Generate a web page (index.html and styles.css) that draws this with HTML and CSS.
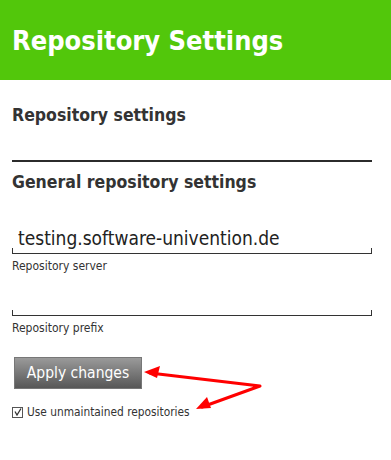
FILE: index.html
```html
<!DOCTYPE html>
<html lang="en">
<head>
    <meta charset="UTF-8">
    <meta name="viewport" content="width=device-width, initial-scale=1.0">
    <title>Repository Settings</title>
    <link rel="stylesheet" href="styles.css">
</head>
<body>
    <div class="header">
        <h1>Repository Settings</h1>
    </div>
    <div class="content">
        <h2 class="section-title">Repository settings</h2>
        <h2 class="group-title">General repository settings</h2>

        <div class="field">
            <input type="text" class="text-input" id="server" value="testing.software-univention.de">
            <label for="server">Repository server</label>
        </div>

        <div class="field">
            <input type="text" class="text-input" id="prefix" value="">
            <label for="prefix">Repository prefix</label>
        </div>

        <button type="button" class="apply">Apply changes</button>

        <label class="check">
            <span class="box">
                <svg width="8" height="8" viewBox="0 0 8 8"><path d="M1 3.5 L3 7 L7 0.5" fill="none" stroke="#333" stroke-width="1.3"/></svg>
            </span>
            Use unmaintained repositories
        </label>

        <!-- annotation arrows -->
        <svg class="arrows" width="391" height="460" viewBox="0 0 391 460">
            <path d="M260 386 L150 373 M260 386 L202 407" fill="none" stroke="#f00" stroke-width="3" stroke-linecap="round"/>
            <path d="M144 372 L160 366 L157 378 Z" fill="#f00"/>
            <path d="M196 409 L207 397 L211 408 Z" fill="#f00"/>
        </svg>
    </div>
</body>
</html>
```

FILE: styles.css
```css
body {
    margin: 0;
    font-family: "DejaVu Sans Condensed", "DejaVu Sans", sans-serif;
    font-stretch: condensed;
    color: #333;
    background-color: #fff;
}

.header {
    background-color: #52c70b;
    height: 80px;
    display: flex;
    align-items: center;
    padding: 0 12px;
}

.header h1 {
    margin: 0;
    color: #fff;
    font-size: 27px;
    font-weight: bold;
}

.content {
    position: relative;
    padding: 0 19px 0 12px;
}

.section-title,
.group-title {
    margin: 0;
    font-size: 17.5px;
    font-weight: bold;
    color: #333;
}

.section-title {
    padding: 25px 0 35px;
    border-bottom: 2px solid #2b2b2b;
}

.group-title {
    padding-top: 10px;
    margin-bottom: 34px;
}

.field {
    margin-bottom: 15px;
}

.text-input {
    display: block;
    box-sizing: border-box;
    width: 100%;
    height: 28px;
    margin: 0;
    padding: 0 5px 3px;
    border: 1px solid #333;
    border-top: none;
    font-family: "DejaVu Sans Condensed", "DejaVu Sans", sans-serif;
    font-stretch: condensed;
    font-size: 19px;
    color: #222;
    background: transparent;
    outline: none;
    border-image: linear-gradient(to bottom, transparent 0, transparent 22px, #333 22px) 1;
}

.field label {
    display: block;
    margin-top: 5px;
    font-size: 12px;
    color: #333;
}

.apply {
    display: block;
    margin: 22px 0 0 2px;
    width: 128px;
    height: 32px;
    border: 1px solid #777;
    background: linear-gradient(to bottom, #9a9a9a, #575757);
    color: #fff;
    font-family: "DejaVu Sans Condensed", "DejaVu Sans", sans-serif;
    font-stretch: condensed;
    font-size: 15.5px;
    padding: 0;
}

.check {
    display: flex;
    align-items: center;
    gap: 4px;
    margin-top: 16px;
    font-size: 11.8px;
    color: #333;
}

.box {
    display: flex;
    align-items: center;
    justify-content: center;
    box-sizing: border-box;
    width: 11px;
    height: 11px;
    border: 1px solid #555;
    background: #fff;
}

.arrows {
    position: absolute;
    left: 0;
    top: -80px;
    pointer-events: none;
}
```
